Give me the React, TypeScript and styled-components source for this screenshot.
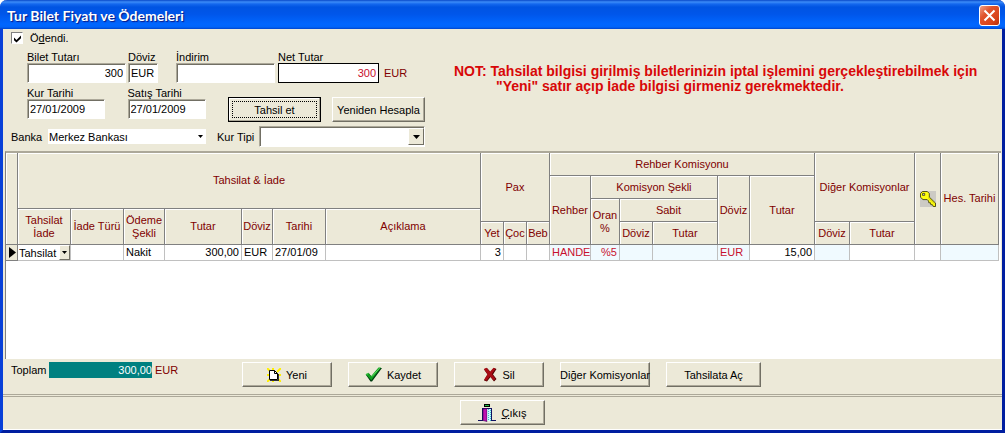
import React from "react";
import styled, { createGlobalStyle } from "styled-components";

const face = "#ece9d8";
const maroon = "#800000";
const crimson = "#c8102e";
const azure = "#f0faff";

const GlobalStyle = createGlobalStyle`
  * { box-sizing: border-box; }
  html, body { margin: 0; padding: 0; }
  body, button, input, select, table {
    font-family: "Liberation Sans", Arial, sans-serif;
    font-size: 11px;
    color: #000;
  }
`;

const Frame = styled.div`
  display: flex;
  flex-direction: column;
  min-height: 100vh;
  min-width: 960px;
  background: ${face};
  border: 3px solid #001ea0;
  border-left-color: #0840d8;
  border-top: 0;
  border-radius: 7px 7px 0 0;
`;

const TitleBar = styled.header`
  display: flex;
  align-items: center;
  justify-content: space-between;
  height: 29px;
  margin: 0 -3px;
  padding: 2px 5px 0 7px;
  border-radius: 7px 7px 0 0;
  background: linear-gradient(
    #0848c8 0, #3c8cf8 2px, #1468ee 4px, #0054e2 7px, #0056ea 14px,
    #0066ff 24px, #0064fa 27px, #0044cc 29px
  );
`;

const Title = styled.h1`
  margin: 0;
  font: 700 14px/18px Lato, sans-serif;
  color: #fff;
  text-shadow: 1px 1px 1px #0a1883;
  white-space: nowrap;
`;

const CloseButton = styled.button`
  display: grid;
  place-items: center;
  width: 21px;
  height: 21px;
  padding: 0;
  border: 1px solid #fff;
  border-radius: 3px;
  background: linear-gradient(135deg, #f0a088, #e0532c 35%, #d84218 75%, #b83008);
`;

const FormPanel = styled.section`
  display: flex;
  gap: 29px;
`;

const FormRows = styled.div`
  display: flex;
  flex-direction: column;
  flex: none;
  gap: 4px;
  width: 422px;
  padding-bottom: 4px;
`;

const CheckLabel = styled.label`
  display: flex;
  align-items: center;
  gap: 7px;
  height: 18px;
  padding-left: 8px;
`;

const CheckMark = styled.span`
  display: grid;
  place-items: center;
  > * { grid-area: 1 / 1; }
  svg { pointer-events: none; visibility: hidden; }
  input:checked + svg { visibility: visible; }
`;

const CheckBox = styled.input`
  appearance: none;
  width: 12px;
  height: 12px;
  margin: 0;
  border: 1px solid #808080;
  border-right-color: #fff;
  border-bottom-color: #fff;
  background: #fff;
`;

const FieldRow = styled.div<{ $tall?: boolean }>`
  display: flex;
  height: ${(p) => (p.$tall ? 35 : 32)}px;
  padding-left: 24px;
`;

const FieldBox = styled.div<{ $width: number; $gap?: number }>`
  display: flex;
  flex-direction: column;
  width: ${(p) => p.$width}px;
  margin-right: ${(p) => p.$gap ?? 2}px;
  label {
    height: 12px;
    line-height: 12px;
    white-space: nowrap;
  }
`;

const TextInput = styled.input<{ $right?: boolean; $strong?: boolean }>`
  width: 100%;
  height: 20px;
  padding: 0 2px;
  outline: none;
  border: 1px solid #aca899;
  border-right-color: #fff;
  border-bottom-color: #fff;
  box-shadow: inset 1px 1px #716f64;
  background: #fff;
  text-align: ${(p) => (p.$right ? "right" : "left")};
  ${(p) => p.$strong && `border-color: #000; box-shadow: none; color: ${crimson};`}
`;

const Unit = styled.span<{ $low?: boolean }>`
  color: ${maroon};
  line-height: 16px;
  padding-top: ${(p) => (p.$low ? 14 : 0)}px;
  margin-left: 3px;
`;

const Button = styled.button<{ $width?: number; $focused?: boolean }>`
  display: flex;
  align-items: center;
  justify-content: center;
  gap: 5px;
  flex: none;
  align-self: flex-end;
  width: ${(p) => p.$width ?? 90}px;
  height: 25px;
  padding: 0;
  border: 1px solid ${(p) => (p.$focused ? "#000" : "#fff")};
  border-right-color: ${(p) => (p.$focused ? "#000" : "#716f64")};
  border-bottom-color: ${(p) => (p.$focused ? "#000" : "#716f64")};
  box-shadow: inset -1px -1px #aca899${(p) => (p.$focused ? ", inset 1px 1px #fff" : "")};
  background: ${face};
  white-space: nowrap;
  ${(p) => p.$focused && "outline: 1px dotted #000; outline-offset: -5px;"}
`;

const RowButtons = styled.div`
  display: flex;
  gap: 11px;
  margin-left: 20px;
`;

const ComboRow = styled.div`
  display: flex;
  align-items: center;
  height: 21px;
  padding-left: 8px;
`;

const ComboLabel = styled.label<{ $width: number }>`
  width: ${(p) => p.$width}px;
  white-space: nowrap;
`;

const Combo = styled.div<{ $width?: number; $sunken?: boolean }>`
  display: grid;
  align-items: center;
  width: ${(p) => (p.$width ? `${p.$width}px` : "100%")};
  height: ${(p) => (p.$sunken ? 21 : 15)}px;
  margin-right: ${(p) => (p.$sunken ? 0 : p.$width ? 11 : 0)}px;
  background: #fff;
  ${(p) =>
    p.$sunken &&
    "border: 1px solid #aca899; border-right-color: #fff; border-bottom-color: #fff; box-shadow: inset 1px 1px #716f64;"}
  > * { grid-area: 1 / 1; }
`;

const Select = styled.select`
  appearance: none;
  width: 100%;
  height: 15px;
  padding: 0 0 0 1px;
  border: 0;
  outline: none;
  background: transparent;
`;

const Arrow = styled.span<{ $kind: "flat" | "small" | "big" }>`
  display: grid;
  place-items: center;
  justify-self: end;
  pointer-events: none;
  width: ${(p) => (p.$kind === "big" ? 16 : 11)}px;
  height: ${(p) => (p.$kind === "big" ? 17 : 15)}px;
  ${(p) =>
    p.$kind !== "flat" &&
    `background: ${face}; border: 1px solid #fff; border-right-color: #716f64; border-bottom-color: #716f64;`}
`;

const Note = styled.p`
  flex: 1;
  margin: 0;
  padding-top: 35px;
  font-size: 14px;
  font-weight: 700;
  line-height: 15px;
  color: #d80808;
  white-space: nowrap;
`;

const NoteLine = styled.span<{ $indent?: boolean }>`
  display: block;
  padding-left: ${(p) => (p.$indent ? 42 : 0)}px;
`;

const GridPanel = styled.section`
  flex: 1;
  margin: 0 1px 0 2px;
  padding-right: 2px;
  border-top: 2px solid #aca899;
  border-left: 1px solid #808080;
  background: #fff;
`;

const Table = styled.table`
  width: 100%;
  table-layout: fixed;
  border-collapse: separate;
  border-spacing: 0;
`;

const HeadRow = styled.tr<{ $height: number }>`
  height: ${(p) => p.$height}px;
`;

const Th = styled.th`
  padding: 0;
  font-weight: 400;
  line-height: 13px;
  color: ${maroon};
  background: ${face};
  border-right: 1px solid #808080;
  border-bottom: 1px solid #808080;
  box-shadow: inset 1px 1px #fff;
  white-space: nowrap;
  svg { display: block; margin: 0 auto; }
`;

const Td = styled.td<{ $right?: boolean; $tint?: boolean; $red?: boolean; $bare?: boolean }>`
  height: 16px;
  padding: ${(p) => (p.$bare ? "0" : "0 2px")};
  line-height: 15px;
  text-align: ${(p) => (p.$right ? "right" : "left")};
  color: ${(p) => (p.$red ? crimson : "#000")};
  background: ${(p) => (p.$tint ? azure : "#fff")};
  border-right: 1px solid #c0c0c0;
  border-bottom: 1px solid #c0c0c0;
  white-space: nowrap;
`;

const Marker = styled.td`
  padding: 0;
  background: ${face};
  border-right: 1px solid #808080;
  border-bottom: 1px solid #808080;
  svg { display: block; margin-left: 3px; }
`;

const ActionBar = styled.section`
  display: flex;
  align-items: flex-start;
  gap: 16px;
  height: 35px;
  padding-top: 3px;
  button { align-self: flex-start; }
`;

const Total = styled.div`
  display: flex;
  width: 223px;
  padding-left: 8px;
  label { width: 38px; line-height: 16px; }
`;

const TotalInput = styled.input`
  width: 103px;
  height: 16px;
  padding: 0;
  border: 0;
  outline: none;
  background: #008080;
  color: #fff;
  text-align: right;
`;

const Footer = styled.footer`
  display: flex;
  justify-content: center;
  height: 36px;
  padding-bottom: 4px;
  border-top: 3px double #aca899;
  border-bottom: 1px solid #fff;
`;

const Down = ({ size = 5 }: { size?: number }) => (
  <svg width={size} height={(size + 1) / 2} viewBox="0 0 10 6" preserveAspectRatio="none" aria-hidden="true">
    <path d="M0 0h10L5 6z" />
  </svg>
);

const KeyIcon = () => (
  <svg width="16" height="16" viewBox="0 0 16 16" aria-hidden="true">
    <path fill="#cccac4" d="M0 0h16v16H0z" />
    <path
      fill="#ffff10"
      stroke="#303000"
      strokeWidth=".8"
      d="M2.5.5h4.8l2 2v3.6l6.2 6v3.4h-2.2l-.9-1.8h-1.6l-.3-1.9H8.800l-.2-1.800-1.400-1.400H3L.5 6.300V2.500z"
    />
    <path fill="#cccac4" stroke="#303000" strokeWidth=".7" d="M2.500 2.400h2.200v2H2.500z" />
    <path stroke="#b8b000" strokeWidth=".7" d="m8 6.500 6.500 6.300" />
  </svg>
);

const NewIcon = () => (
  <svg width="14" height="14" viewBox="0 0 14 14" aria-hidden="true">
    <path stroke="#fff000" strokeWidth="2" d="m0 0 4 4M6 0v4M14 0l-4 4M0 7h4M14 7h-4M0 14l4-4M14 14l-3-3M6 14v-3" />
    <path fill="#fff" stroke="#000" d="M2.500 2.500h5l3 3v6h-8z" />
    <path fill="none" stroke="#000" d="M7.500 2.500v3h3" />
    <path stroke="#303030" d="M3 12.500h9M11.500 6v6" />
  </svg>
);

const TickIcon = () => (
  <svg width="17" height="15" viewBox="0 0 17 15" aria-hidden="true">
    <path fill="#003c10" d="m1 8 3-1.500 2.500 3L15 1h2L7 14.500H5.500z" />
    <path fill="#10a020" d="m.5 7.300 3-1.500L6 9.200 13.500.5H16L6.300 13.200z" />
    <path stroke="#60d860" d="m1.500 7.300 1.800-.7M7 9.500l7.500-8.300" />
  </svg>
);

const CrossIcon = () => (
  <svg width="14" height="15" viewBox="0 0 14 15" aria-hidden="true">
    <path fill="#500000" d="M1 2.500 4 1l3.500 4L11 1l2.500 1-3.500 5.500 3.500 4.500-2.500 2.500L7.500 10 4 14.500 1 13.500l3.500-6z" />
    <path fill="#a80c14" d="m.8 2 2.700-1.200L7 4.800 10.500.8l2 1L9 7l3.500 5-2 1.500L7 9.200l-3.500 4.500-2.500-1 3.500-5.500z" />
  </svg>
);

const ExitIcon = () => (
  <svg width="18" height="18" viewBox="0 0 18 18" aria-hidden="true">
    <path fill="#000" d="M6 0h6v3H6z" />
    <path fill="#20c040" d="M7 1h4v1H7z" />
    <path fill="#101060" d="M4 4h10v12h4v1h-5V5H5v12H0v-1h4z" />
    <path fill="#c010b0" stroke="#300050" strokeWidth=".6" d="M5 5l4-.5v13l-4-1z" />
    <path fill="#c8f8ff" d="M9.300 5H13v12H9.300z" />
    <path stroke="#40b8c8" strokeDasharray="1 1" d="M10.500 5v12M12.500 6v11" />
  </svg>
);

const columns: (number | undefined)[] = [
  12, 53, 53, 41, 77, 31, 53, undefined, 23, 23, 23, 41, 29, 33, 65, 32, 65, 35, 65, 26, 58,
];

interface FieldProps {
  id: string;
  label: string;
  width: number;
  gap?: number;
  value?: string;
  right?: boolean;
  strong?: boolean;
}

const Field = ({ id, label, width, gap, value = "", right, strong }: FieldProps) => (
  <FieldBox $width={width} $gap={gap}>
    <label htmlFor={id}>{label}</label>
    <TextInput id={id} defaultValue={value} $right={right} $strong={strong} />
  </FieldBox>
);

export default function App() {
  return (
    <Frame>
      <GlobalStyle />
      <TitleBar>
        <Title>Tur Bilet Fiyatı ve Ödemeleri</Title>
        <CloseButton type="button" aria-label="Kapat">
          <svg width="13" height="13" viewBox="0 0 13 13" aria-hidden="true">
            <path stroke="#fff" strokeWidth="2" d="m1.500 1.500 10 10M11.500 1.500l-10 10" />
          </svg>
        </CloseButton>
      </TitleBar>

      <FormPanel>
        <FormRows>
          <CheckLabel>
            <CheckMark>
              <CheckBox type="checkbox" defaultChecked />
              <svg width="9" height="9" viewBox="0 0 9 9" aria-hidden="true">
                <path d="M1 3.500 3.500 6 8 1.500v2.800L3.500 8.600 1 6.200z" />
              </svg>
            </CheckMark>
            <span>Ö<u>d</u>endi.</span>
          </CheckLabel>
          <FieldRow>
            <Field id="bilet" label="Bilet Tutarı" width={99} value="300" right />
            <Field id="doviz" label="Döviz" width={30} gap={18} value="EUR" />
            <Field id="indirim" label="İndirim" width={99} gap={3} />
            <Field id="net" label="Net Tutar" width={101} value="300" right strong />
            <Unit $low>EUR</Unit>
          </FieldRow>
          <FieldRow $tall>
            <Field id="kurTarihi" label="Kur Tarihi" width={78} gap={23} value="27/01/2009" />
            <Field id="satisTarihi" label="Satış Tarihi" width={79} value="27/01/2009" />
            <RowButtons>
              <Button type="button" $width={93} $focused>Tahsil et</Button>
              <Button type="button" $width={93}>Yeniden Hesapla</Button>
            </RowButtons>
          </FieldRow>
          <ComboRow>
            <ComboLabel htmlFor="banka" $width={37}>Banka</ComboLabel>
            <Combo $width={158}>
              <Select id="banka"><option>Merkez Bankası</option></Select>
              <Arrow $kind="flat"><Down /></Arrow>
            </Combo>
            <ComboLabel htmlFor="kurTipi" $width={42}>Kur Tipi</ComboLabel>
            <Combo $width={166} $sunken>
              <Select id="kurTipi"><option></option></Select>
              <Arrow $kind="big"><Down size={7} /></Arrow>
            </Combo>
          </ComboRow>
        </FormRows>
        <Note>
          <NoteLine>NOT: Tahsilat bilgisi girilmiş biletlerinizin iptal işlemini gerçekleştirebilmek için</NoteLine>
          <NoteLine $indent>"Yeni" satır açıp İade bilgisi girmeniz gerekmektedir.</NoteLine>
        </Note>
      </FormPanel>

      <GridPanel>
        <Table>
          <colgroup>
            {columns.map((w, i) => <col key={i} width={w} />)}
          </colgroup>
          <thead>
            <HeadRow $height={23}>
              <Th rowSpan={5} />
              <Th colSpan={7} rowSpan={3}>Tahsilat &amp; İade</Th>
              <Th colSpan={3} rowSpan={4}>Pax</Th>
              <Th colSpan={6}>Rehber Komisyonu</Th>
              <Th colSpan={2} rowSpan={4}>Diğer Komisyonlar</Th>
              <Th rowSpan={5}><KeyIcon /></Th>
              <Th rowSpan={5}>Hes. Tarihi</Th>
            </HeadRow>
            <HeadRow $height={23}>
              <Th rowSpan={4}>Rehber</Th>
              <Th colSpan={3}>Komisyon Şekli</Th>
              <Th rowSpan={4}>Döviz</Th>
              <Th rowSpan={4}>Tutar</Th>
            </HeadRow>
            <HeadRow $height={10}>
              <Th rowSpan={3}>Oran<br />%</Th>
              <Th colSpan={2} rowSpan={2}>Sabit</Th>
            </HeadRow>
            <HeadRow $height={13}>
              <Th rowSpan={2}>Tahsilat<br />İade</Th>
              <Th rowSpan={2}>İade Türü</Th>
              <Th rowSpan={2}>Ödeme<br />Şekli</Th>
              <Th rowSpan={2}>Tutar</Th>
              <Th rowSpan={2}>Döviz</Th>
              <Th rowSpan={2}>Tarihi</Th>
              <Th rowSpan={2}>Açıklama</Th>
            </HeadRow>
            <HeadRow $height={23}>
              <Th>Yet</Th>
              <Th>Çoc</Th>
              <Th>Beb</Th>
              <Th>Döviz</Th>
              <Th>Tutar</Th>
              <Th>Döviz</Th>
              <Th>Tutar</Th>
            </HeadRow>
          </thead>
          <tbody>
            <tr>
              <Marker>
                <svg width="7" height="11" viewBox="0 0 7 11" aria-hidden="true"><path d="M0 0v11l7-5.500z" /></svg>
              </Marker>
              <Td $bare>
                <Combo>
                  <Select aria-label="Tahsilat İade"><option>Tahsilat</option></Select>
                  <Arrow $kind="small"><Down /></Arrow>
                </Combo>
              </Td>
              <Td />
              <Td>Nakit</Td>
              <Td $right>300,00</Td>
              <Td>EUR</Td>
              <Td>27/01/09</Td>
              <Td />
              <Td $right>3</Td>
              <Td />
              <Td />
              <Td $tint $red>HANDE</Td>
              <Td $tint $red $right>%5</Td>
              <Td $tint />
              <Td $tint />
              <Td $tint $red>EUR</Td>
              <Td $right>15,00</Td>
              <Td $tint />
              <Td />
              <Td />
              <Td $tint />
            </tr>
          </tbody>
        </Table>
      </GridPanel>

      <ActionBar>
        <Total>
          <label htmlFor="toplam">Toplam</label>
          <TotalInput id="toplam" readOnly value="300,00" />
          <Unit>EUR</Unit>
        </Total>
        <Button type="button"><NewIcon />Yeni</Button>
        <Button type="button"><TickIcon />Kaydet</Button>
        <Button type="button"><CrossIcon />Sil</Button>
        <Button type="button">Diğer Komisyonlar</Button>
        <Button type="button" $width={95}>Tahsilata Aç</Button>
      </ActionBar>

      <Footer>
        <Button type="button" $width={85}><ExitIcon /><span><u>Ç</u>ıkış</span></Button>
      </Footer>
    </Frame>
  );
}
